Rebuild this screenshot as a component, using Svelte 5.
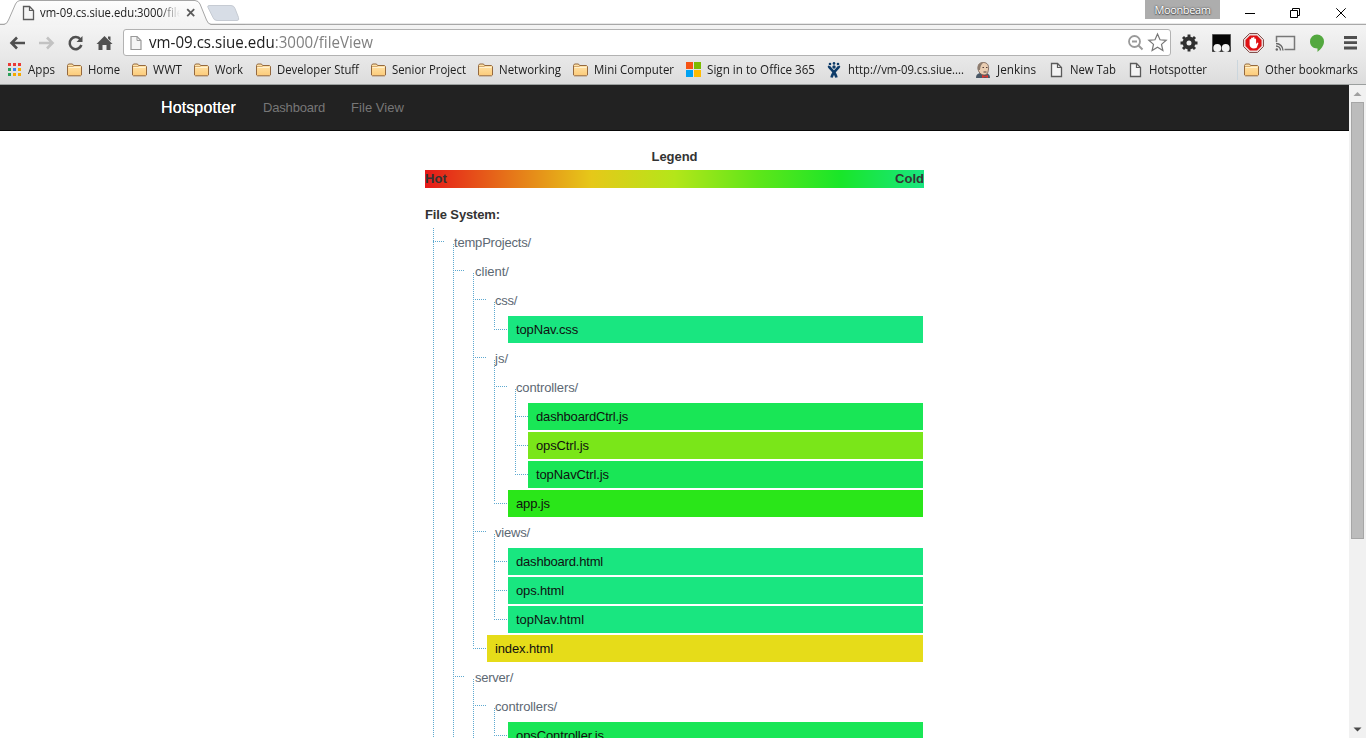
<script>
  const bookmarks = [
    { icon: 'apps', text: 'Apps', w: 27 },
    { icon: 'folder', text: 'Home', w: 32 },
    { icon: 'folder', text: 'WWT', w: 29 },
    { icon: 'folder', text: 'Work', w: 28 },
    { icon: 'folder', text: 'Developer Stuff', w: 82 },
    { icon: 'folder', text: 'Senior Project', w: 74 },
    { icon: 'folder', text: 'Networking', w: 62 },
    { icon: 'folder', text: 'Mini Computer', w: 80 },
    { icon: 'office', text: 'Sign in to Office 365', w: 108 },
    { icon: 'jira', text: 'http://vm-09.cs.siue....', w: 116 },
    { icon: 'jenkins', text: 'Jenkins', w: 39 },
    { icon: 'page', text: 'New Tab', w: 46 },
    { icon: 'page', text: 'Hotspotter', w: 58 }
  ];

  const tree = [
    { name: 'tempProjects/', w: 77, children: [
      { name: 'client/', w: 34, children: [
        { name: 'css/', w: 22, children: [{ name: 'topNav.css', w: 62, color: '#19e680' }] },
        { name: 'js/', w: 13, children: [
          { name: 'controllers/', w: 62, children: [
            { name: 'dashboardCtrl.js', w: 92, color: '#19e656' },
            { name: 'opsCtrl.js', w: 53, color: '#7ae619' },
            { name: 'topNavCtrl.js', w: 73, color: '#19e656' }
          ] },
          { name: 'app.js', w: 34, color: '#2ae619' }
        ] },
        { name: 'views/', w: 35, children: [
          { name: 'dashboard.html', w: 87, color: '#19e680' },
          { name: 'ops.html', w: 48, color: '#19e680' },
          { name: 'topNav.html', w: 68, color: '#19e680' }
        ] },
        { name: 'index.html', w: 58, color: '#e6dc19' }
      ] },
      { name: 'server/', w: 38, more: true, children: [
        { name: 'controllers/', w: 62, children: [{ name: 'opsController.js', w: 88, color: '#19e656' }] }
      ] }
    ], more: true }
  ];

  // Per-level geometry: offset from the parent line, label inset, bar inset, connector length
  const step = [8, 20, 20, 21, 21];
  const inset = [21, 22, 22, 22, 21];
  const bar = [13, 14, 14, 14, 13];
  const tick = [11, 11, 13, 13, 13];

  // Tracks text out or in so that it fills the given width
  function fit(node, width) {
    const natural = node.getBoundingClientRect().width;
    node.style.letterSpacing = (width - natural) / node.textContent.length + 'px';
  }

  // Condenses the glyphs themselves to the given width
  function squeeze(node, width) {
    const natural = node.getBoundingClientRect().width;
    node.style.width = width + 'px';
    node.style.transformOrigin = '0 50%';
    node.style.transform = `scaleX(${width / natural})`;
  }
</script>

{#snippet icon(kind)}
  <svg class="ico" width="16" height="16" viewBox="0 0 16 16">
    {#if kind === 'apps'}
      {#each [['#ea3a35', '#ea3a35', '#ea3a35'], ['#2ca05a', '#3f80f0', '#f5a900'], ['#2ca05a', '#f5a900', '#f5a900']] as row, r}
        {#each row as c, i}<rect x={1 + i * 5} y={1 + r * 5} width="3" height="3" fill={c} />{/each}
      {/each}
    {:else if kind === 'folder'}
      <defs><linearGradient id="fold" x2="0" y2="1"><stop stop-color="#ffe5ad" /><stop offset="1" stop-color="#fccb79" /></linearGradient></defs>
      <path d="M.5 13V3.500L1.500 2h4l1 1.500h7l1 1V13l-1 .8h-12z" fill="url(#fold)" stroke="#94693f" />
      <path d="M1.500 5.500h12" stroke="#fff0cf" />
      <path d="M1 4.500h5l1-.9" stroke="#c99a60" fill="none" stroke-width=".8" />
    {:else if kind === 'office'}
      <path d="M0 0h7v7H0z" fill="#f65314" /><path d="M8 0h7v7H8z" fill="#7cbb00" />
      <path d="M0 8h7v7H0z" fill="#00a1f1" /><path d="M8 8h7v7H8z" fill="#ffbb00" />
    {:else if kind === 'jira'}
      <g transform="translate(-1 0)">
        <g fill="#0d3b68"><circle cx="4" cy="2" r="1.300" /><circle cx="8" cy="1.400" r="1.300" /><circle cx="12" cy="2" r="1.300" /><circle cx="8" cy="5" r="1.700" /></g>
        <path d="M3 4.500c1 3 6 4 7.500 11M13 4.500c-1 3-6 4-7.500 11" fill="none" stroke="#0d3b68" stroke-width="2.500" />
        <path d="M2 4l3 2M14 4l-3 2" stroke="#0d3b68" stroke-width="1.500" />
      </g>
    {:else if kind === 'jenkins'}
      <path d="M0 16c0-3 1-4 4-5h6c3 1 4 2 4 5z" fill="#4a5866" />
      <path d="M2 6c0-4 2-5.500 5.500-5.500S13 3 12.500 7s-1.500 6-4.500 6S2 10 2 6z" fill="#e9cdb2" stroke="#6c5448" stroke-width=".8" />
      <path d="M2 8C1 4 3 0 8 .5 5 2 4.500 4.500 4 8z" fill="#8d7c6e" />
      <path d="M6.500 5.500H8M10 5.500h1.500M7.500 10h3" stroke="#513d36" />
      <path d="M6 13l3 1 3-1v3l-3-1-3 1z" fill="#d93831" />
    {:else}
      <path d="M2.500 1.500h6l4 4v9h-10z" fill="#f4f4f4" stroke="#5b5b5b" stroke-width="1.300" />
      <path d="M8.500 1.500v4h4" fill="none" stroke="#5b5b5b" stroke-width="1.200" />
    {/if}
  </svg>
{/snippet}

{#snippet branch(nodes, depth, more)}
  <ul class:more style="margin-left:{step[depth]}px">
    {#each nodes as n}
      <li>
        {#if n.children}
          <div class="row">
            <i class="tick dir" style="width:{tick[depth]}px;margin-right:{inset[depth] - tick[depth]}px"></i>
            <span class="dirname" use:fit={n.w}>{n.name}</span>
          </div>
          {@render branch(n.children, depth + 1, n.more)}
        {:else}
          <div class="row">
            <i class="tick" style="width:{bar[depth]}px"></i>
            <div class="file" style="background:{n.color}"><span use:fit={n.w}>{n.name}</span></div>
          </div>
        {/if}
      </li>
    {/each}
  </ul>
{/snippet}

<div class="window">
  <header class="strip">
    <div class="tab">
      <svg class="tabshape" width="245" height="25" viewBox="0 0 245 25">
        <defs><linearGradient id="tabg" x2="0" y2="1"><stop stop-color="#fdfdfd" /><stop offset="1" stop-color="#f3f3f3" /></linearGradient></defs>
        <path d="M0 24.500H4Q7 24 8.500 20L15.500 4Q17 .7 20 .5H195Q198.500 .7 200 4L206.500 20Q208 24 211 24.500V25H0z" fill="url(#tabg)" />
        <path d="M0 24.500H4Q7 24 8.500 20L15.500 4Q17 .7 20 .5H195Q198.500 .7 200 4L206.500 20Q208 24 211 24.500H245" fill="none" stroke="#a5a5a5" />
        <path d="M209 5.500h22q3 0 4 3l3.500 9q1 3-1.500 3h-20q-3 0-4-3l-5-10q-.8-2 1-2z" fill="#d7dde6" stroke="#c6cbd3" />
      </svg>
      {@render icon('page')}
      <span class="tabtitle"><span use:squeeze={143}>vm-09.cs.siue.edu:3000/file</span></span>
      <svg class="x" width="10" height="10" viewBox="0 0 10 10"><path d="M1.200 1.200l7 7M8.200 1.200l-7 7" stroke="#5a5a5a" stroke-width="1.800" /></svg>
    </div>
    <div class="user"><span use:fit={56}>Moonbeam</span></div>
    <svg class="winbtns" width="126" height="24" viewBox="0 0 126 24" fill="none" stroke="#000">
      <path d="M5 13.500h10M50.500 10.500h7v7h-7zM52.500 10V8.500h7v7H58M96.300 8.300l9.400 9.400M105.700 8.300l-9.400 9.400" />
    </svg>
  </header>

  <div class="toolbar">
    <svg class="nav" width="120" height="28" viewBox="0 0 120 28" fill="none">
      <path d="M12 14h13M17 8.500L11.500 14l5.500 5.500" stroke="#505050" stroke-width="2.600" />
      <path d="M39 14h13M47 8.500l5.500 5.500-5.500 5.500" stroke="#c2c2c2" stroke-width="2.600" />
      <path d="M80.500 10.500a6 6 0 1 0 .9 5.500" stroke="#505050" stroke-width="2.500" />
      <path d="M82.500 7v6h-6z" fill="#505050" />
      <path d="M96.500 15L104.500 7l8 8h-2v6h-4v-5h-4v5h-4v-6zM108 7.500h2.500V12L108 9.500z" fill="#505050" />
    </svg>
    <div class="omni">
      <svg class="pg" width="16" height="18" viewBox="0 0 16 18"><path d="M3 2.500h6l4 4v9H3z" fill="#f5f5f5" stroke="#999" stroke-width="1.200" /><path d="M9 2.500v4h4" fill="none" stroke="#999" /></svg>
      <span class="url" use:squeeze={224}>vm-09.cs.siue.edu<em>:3000/fileView</em></span>
      <svg width="43" height="24" viewBox="0 0 43 24" fill="none">
        <circle cx="7.500" cy="10.500" r="5.500" stroke="#9a9a9a" stroke-width="1.800" /><path d="M5 10.500h5M11.500 14.500l4 4" stroke="#9a9a9a" stroke-width="2" />
        <path d="M30.500 3l2.500 5.800 6.200.5-4.700 4.100 1.400 6.100-5.400-3.200-5.400 3.200 1.400-6.100-4.700-4.100 6.200-.5z" fill="#fff" stroke="#777" stroke-width="1.200" />
      </svg>
    </div>
    <svg class="ext" width="195" height="28" viewBox="0 0 195 28">
      <circle cx="18" cy="14" r="4.500" fill="none" stroke="#303030" stroke-width="4" />
      <g stroke="#303030" stroke-width="2.900"><path d="M18 5.500v3M18 19.500v3M9.500 14h3M23.500 14h3M12 8l2 2M22 18l2 2M24 8l-2 2M14 18l-2 2" /></g>
      <path d="M41.500 5.500h18v17h-18z" fill="#050505" stroke="#555" />
      <path d="M41.500 22.500v-5h18v5z" fill="#333" />
      <circle cx="46.300" cy="19" r="3.900" fill="#f2f2f2" /><circle cx="54.700" cy="19" r="3.900" fill="#f2f2f2" />
      <path d="M78.500 4.500h8l6 6v7l-6 6h-8l-6-6v-7z" fill="#e8d9d8" stroke="#83504d" />
      <path d="M79 6.500h7l4.500 4.500v6L86 21.500h-7L74.500 17v-6z" fill="#df1013" />
      <path d="M78.600 14.500v-4q.9-1 1.500.3V9q.9-1 1.700 0V8.500q1-1 1.700 0V10q1-1 1.600.4V15l1.400-1.500q1.500 0 .7 1.500L85.500 19q-6 1.500-6.900-3z" fill="#fff" />
      <path d="M105.500 13V7.500h18v13h-10" fill="none" stroke="#777" stroke-width="1.500" />
      <path d="M105 14.500a7 7 0 0 1 7 7M105 17a4.500 4.500 0 0 1 4.500 4.500" fill="none" stroke="#666" stroke-width="1.400" /><circle cx="105.800" cy="20.500" r="1.200" fill="#666" />
      <path d="M146 5.500a7 7 0 0 1 7 7c0 4-3 7.500-6.500 10.500v-3.500c-4.500 0-7.500-2.800-7.500-7a7 7 0 0 1 7-7z" fill="#53a83f" />
      <path d="M173 8.500h13M173 13.700h13M173 19h13" stroke="#4f4f4f" stroke-width="2.800" />
    </svg>
  </div>

  <nav class="bookmarks">
    {#each bookmarks as b}
      <div class="bm" style="width:{b.w + 21}px">{@render icon(b.icon)}<span use:squeeze={b.w}>{b.text}</span></div>
    {/each}
    <div class="other">{@render icon('folder')}<span use:squeeze={93}>Other bookmarks</span></div>
  </nav>

  <div class="view">
    <div class="page">
      <div class="navbar">
        <b use:fit={75}>Hotspotter</b>
        <a class="d" href="#dashboard" use:fit={62}>Dashboard</a>
        <a href="#files" use:fit={53}>File View</a>
      </div>
      <main>
        <div class="title"><strong use:fit={46}>Legend</strong></div>
        <div class="legend"><strong use:fit={22}>Hot</strong><strong use:fit={29}>Cold</strong></div>
        <div class="fs"><strong use:fit={75}>File System:</strong></div>
        {@render branch(tree, 0, true)}
      </main>
    </div>
    <div class="scroll">
      <svg width="17" height="17"><path d="M4.500 11l4-4 4 4z" fill="#a0a0a0" /></svg>
      <div class="thumb"></div>
      <svg class="down" width="17" height="17"><path d="M4.500 6.500h8l-4 4z" fill="#4a4a4a" /></svg>
    </div>
  </div>
</div>

<style>
  :global(body) { margin: 0; overflow: hidden; }
  .window { width: 1366px; height: 738px; display: flex; flex-direction: column; overflow: hidden; background: #fff; font: 12px "Open Sans", "Noto Sans", sans-serif; color: #202020; white-space: nowrap; }
  svg { display: block; flex: none; }
  span, b, a, strong { flex: none; }
  .strip { height: 24px; flex: none; display: flex; box-shadow: inset 0 -1px #e8e8e8; }
  .tab { position: relative; width: 245px; height: 25px; display: flex; align-items: center; padding-left: 21px; box-sizing: border-box; z-index: 1; }
  .tabshape { position: absolute; left: 0; top: 0; z-index: -1; }
  .tabtitle { width: 140px; margin-left: 3px; overflow: hidden; -webkit-mask: linear-gradient(90deg, #000 85%, transparent); mask: linear-gradient(90deg, #000 85%, transparent); }
  .tabtitle span { display: inline-block; }
  .x { margin-left: 6px; }
  .user { margin-left: auto; width: 75px; height: 19px; background: #adadad; display: flex; align-items: center; justify-content: center; font-size: 11px; line-height: 18px; color: #fff; text-shadow: 0 0 2px #333, 0 1px 1px #555; }
  .winbtns { margin-left: 20px; }
  .toolbar { height: 36px; flex: none; display: flex; align-items: center; background: linear-gradient(#f4f4f4, #e7e7e7); border-top: 1px solid #a8a8a8; box-sizing: border-box; }
  .nav { margin-right: 3px; }
  .omni { width: 1048px; height: 27px; box-sizing: border-box; border: 1px solid #b2b2b2; border-radius: 3px; background: #fff; display: flex; align-items: center; padding: 0 0 0 4px; }
  .url { font-size: 15.500px; margin-left: 5px; margin-right: auto; color: #202020; line-height: 22px; padding-bottom: 2px; }
  .url em { font-style: normal; color: #808080; }
  .bookmarks { height: 25px; flex: none; display: flex; align-items: center; padding: 0 8px 5px 7px; gap: 12.150px; background: linear-gradient(#e7e7e7, #dcdcdc); border-bottom: 1px solid #9b9f9e; box-sizing: border-box; }
  .bm, .other { display: flex; align-items: center; gap: 5px; flex: none; line-height: 20px; }
  .other { margin-left: auto; padding-left: 6px; border-left: 1px solid #cbd6dd; }
  .view { flex: 1; min-height: 0; display: flex; font-family: "Liberation Sans", Arial, sans-serif; font-size: 13px; }
  .page { width: 1349px; overflow: hidden; }
  .navbar { height: 46px; box-sizing: border-box; background: #222; border-bottom: 1px solid #080808; display: flex; align-items: center; padding-left: 161px; color: #777; }
  .navbar b { font-size: 16px; font-weight: 400; color: #fff; text-shadow: 0 0 .5px #fff; line-height: 46px; }
  .navbar a { color: #777; text-decoration: none; margin-left: 26px; }
  .navbar .d { margin-left: 27px; }
  main { width: 499px; margin-left: 425px; color: #333; }
  .title { display: flex; justify-content: center; height: 39px; line-height: 51px; }
  .legend { height: 18px; line-height: 18px; display: flex; justify-content: space-between; background: linear-gradient(90deg, #e61919, #e67319 16.670%, #e6c819 33.330%, #b4e619 50%, #5ee619 66.670%, #19e629 83.330%, #19e680); }
  .fs { height: 41px; line-height: 54px; }
  ul { position: relative; list-style: none; margin: 0; padding: 0; }
  ul::before { content: ""; position: absolute; left: 0; top: -14px; bottom: 15px; width: 1px; background: repeating-linear-gradient(#5da9d0 0 1px, transparent 1px 2px); }
  ul.more::before { bottom: 0; }
  main > ul::before { top: -1px; }
  .row { height: 27px; margin-bottom: 2px; display: flex; line-height: 27px; }
  .tick { flex: none; height: 1px; margin-top: 13px; background: repeating-linear-gradient(90deg, #5da9d0 0 1px, transparent 1px 2px); }
  .tick.dir { margin-top: 12px; }
  .dirname { color: #5c6873; }
  .file { flex: 1; padding-left: 8px; margin-right: 1px; color: #101010; }
  .scroll { width: 17px; background: #f1f1f1; display: flex; flex-direction: column; }
  .thumb { width: 13px; height: 437px; box-sizing: border-box; margin-left: 2px; background: #bcbcbc; border: 1px solid #a6a6a6; }
  .down { margin-top: auto; }
</style>
